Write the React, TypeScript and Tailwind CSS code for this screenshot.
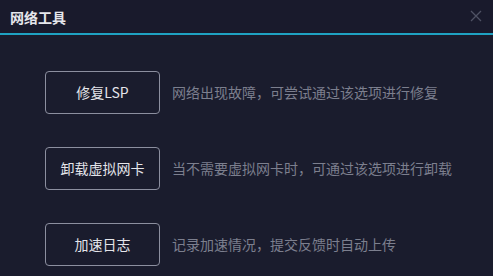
import React from "react";

const rows = [
  { label: "修复LSP", desc: "网络出现故障，可尝试通过该选项进行修复" },
  { label: "卸载虚拟网卡", desc: "当不需要虚拟网卡时，可通过该选项进行卸载" },
  { label: "加速日志", desc: "记录加速情况，提交反馈时自动上传" },
];

export default function App() {
  return (
    <div
      className="w-[493px] h-[276px] bg-[#1a1c2d] flex flex-col overflow-hidden"
      style={{ fontFamily: '"Noto Sans CJK SC", "Noto Sans", sans-serif' }}
    >
      <div className="h-[33px] flex items-center justify-between pl-[10px] pr-[11px] bg-[#191a2c]">
        <span className="text-[14px] font-bold text-[#e6e7ec] leading-none">网络工具</span>
        <svg width="12" height="12" viewBox="0 0 12 12" className="mt-[-2px]">
          <path d="M1 1L11 11M11 1L1 11" stroke="#4f5264" strokeWidth="1.3" />
        </svg>
      </div>
      <div className="h-[2px] bg-[#1fa2c2]" />
      <div className="flex flex-col gap-[33px] pl-[45px] pt-[36px]">
        {rows.map((r) => (
          <div key={r.label} className="flex items-center gap-[12px]">
            <div className="w-[115px] h-[43px] rounded-[4px] border border-[#8c8f9f] flex items-center justify-center text-[14px] text-[#e4e5ea]">
              {r.label}
            </div>
            <span className="text-[14px] text-[#7c7f8e]">{r.desc}</span>
          </div>
        ))}
      </div>
    </div>
  );
}
